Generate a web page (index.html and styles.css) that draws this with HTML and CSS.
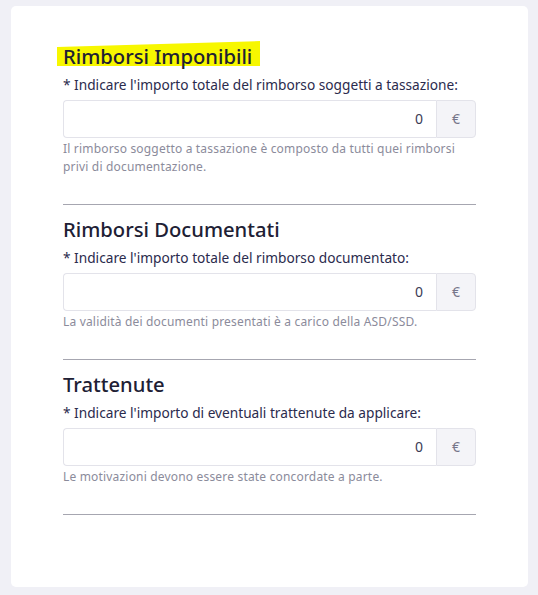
FILE: index.html
```html
<!DOCTYPE html>
<html lang="it">
<head>
<meta charset="utf-8">
<title>Rimborsi</title>
<link rel="stylesheet" href="styles.css">
</head>
<body>
<div class="card">
  <section class="section first">
    <h2 class="title"><span class="marker">Rimborsi Imponibili</span></h2>
    <label class="label">* Indicare l'importo totale del rimborso soggetti a tassazione:</label>
    <div class="input-group">
      <div class="input">0</div>
      <div class="addon">€</div>
    </div>
    <p class="help">Il rimborso soggetto a tassazione è composto da tutti quei rimborsi privi di documentazione.</p>
  </section>
  <hr class="divider">
  <section class="section">
    <h2 class="title">Rimborsi Documentati</h2>
    <label class="label">* Indicare l'importo totale del rimborso documentato:</label>
    <div class="input-group">
      <div class="input">0</div>
      <div class="addon">€</div>
    </div>
    <p class="help">La validità dei documenti presentati è a carico della ASD/SSD.</p>
  </section>
  <hr class="divider">
  <section class="section">
    <h2 class="title">Trattenute</h2>
    <label class="label">* Indicare l'importo di eventuali trattenute da applicare:</label>
    <div class="input-group">
      <div class="input">0</div>
      <div class="addon">€</div>
    </div>
    <p class="help">Le motivazioni devono essere state concordate a parte.</p>
  </section>
  <hr class="divider">
</div>
</body>
</html>
```
FILE: styles.css
```css
html, body {
  margin: 0;
  padding: 0;
}
body {
  background: #f0f0f6;
  font-family: "Noto Sans", "Open Sans", sans-serif;
  padding: 6px 10px 8px 11px;
}
.card {
  background: #ffffff;
  border-radius: 5px;
  height: 581px;
  box-sizing: border-box;
  padding: 0 52px;
  display: flex;
  flex-direction: column;
}
.section {
  display: flex;
  flex-direction: column;
  padding-top: 12px;
}
.section.first {
  padding-top: 38px;
}
.title {
  margin: 0;
  font-size: 20.2px;
  line-height: 24px;
  font-weight: 500;
  color: #202034;
}
.marker {
  position: relative;
  z-index: 0;
}
.marker::before {
  content: "";
  position: absolute;
  z-index: -1;
  left: -6px;
  right: -8px;
  top: -1px;
  bottom: 4px;
  background: #f7f700;
  clip-path: polygon(0 24%, 100% 0, 100% 100%, 0 100%);
}
.label {
  margin-top: 6px;
  font-size: 13.7px;
  line-height: 21px;
  color: #2b2b4d;
}
.input-group {
  margin-top: 5px;
  display: flex;
  height: 38px;
}
.input {
  flex: 1;
  border: 1px solid #e3e3ea;
  border-right: none;
  border-radius: 4px 0 0 4px;
  text-align: right;
  padding-right: 13px;
  font-size: 14px;
  line-height: 36px;
  color: #3b3b55;
}
.addon {
  width: 38px;
  border: 1px solid #e3e3ea;
  border-radius: 0 4px 4px 0;
  background: #f4f4f8;
  text-align: center;
  font-size: 14px;
  line-height: 36px;
  color: #76768a;
}
.help {
  margin: 2px 0 0;
  font-size: 12px;
  letter-spacing: 0.18px;
  line-height: 18px;
  color: #8b8b9b;
}
.divider {
  margin: 28px 0 0;
  border: none;
  border-top: 1px solid #a6a6b0;
  height: 0;
}
```
